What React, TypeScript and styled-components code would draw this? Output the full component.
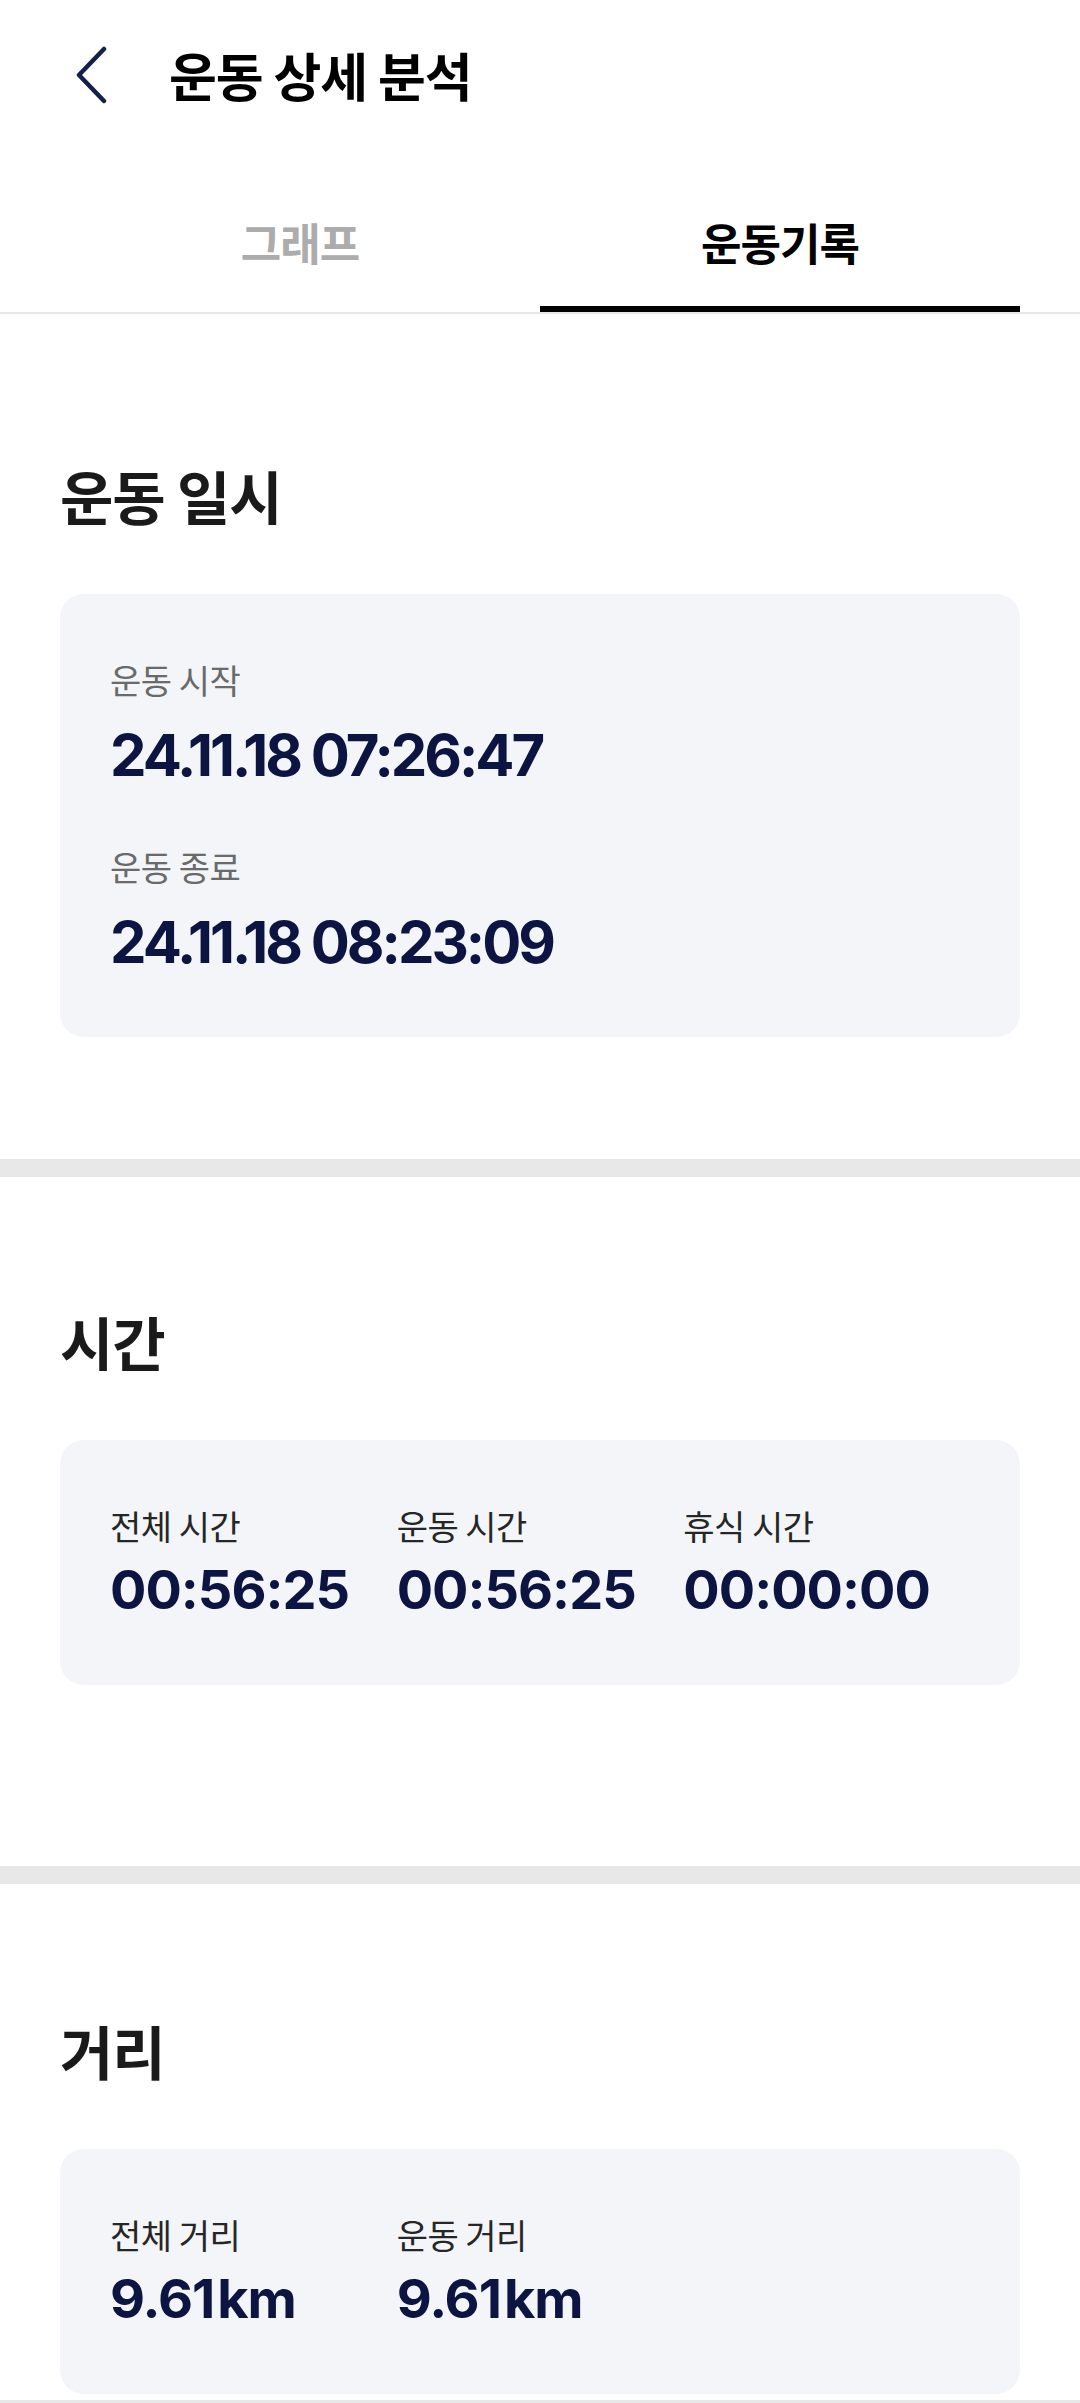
import React from 'react';
import styled, { createGlobalStyle } from 'styled-components';

const GlobalStyle = createGlobalStyle`
  body {
    margin: 0;
    background: #ffffff;
    font-family: 'Noto Sans CJK KR', 'Noto Sans', sans-serif;
  }
`;

const Page = styled.div`
  width: 1080px;
  background: #ffffff;
`;

const Header = styled.header`
  height: 150px;
  box-sizing: border-box;
  display: flex;
  align-items: center;
  gap: 62px;
  padding-left: 75px;
`;

const BackButton = styled.button`
  display: flex;
  width: 32px;
  height: 58px;
  padding: 0;
  border: 0;
  background: none;
`;

const Title = styled.h1`
  margin: 0;
  color: #000000;
  font-size: 52px;
  font-weight: 700;
  line-height: 1;
  letter-spacing: -1px;
`;

const TabBar = styled.nav`
  display: flex;
  padding: 0 60px;
  border-bottom: 2px solid #e8e8e8;
`;

const Tab = styled.div<{ $active?: boolean }>`
  flex: 1;
  height: 162px;
  box-sizing: border-box;
  padding-top: 28px;
  display: flex;
  align-items: center;
  justify-content: center;
  border-bottom: 6px solid ${(p) => (p.$active ? '#000000' : 'transparent')};
  color: ${(p) => (p.$active ? '#000000' : '#acacac')};
  font-size: 44px;
  font-weight: 700;
  letter-spacing: -1px;
`;

const Section = styled.section<{ $top: number; $bottom: number }>`
  padding: ${(p) => p.$top}px 60px ${(p) => p.$bottom}px;
`;

const Heading = styled.h2`
  margin: 0 0 65px;
  color: #1a1a1a;
  font-size: 58px;
  font-weight: 700;
  line-height: 68px;
  letter-spacing: -1px;
`;

const Divider = styled.div`
  height: 18px;
  background: #e8e8e8;
`;

const Card = styled.div<{ $bottom: number }>`
  background: #f3f5f9;
  border-radius: 24px;
  padding: 64px 50px ${(p) => p.$bottom}px;
`;

const DateList = styled.div`
  display: flex;
  flex-direction: column;
  gap: 57px;
`;

const StatGrid = styled.div`
  display: grid;
  grid-template-columns: repeat(3, 1fr);
`;

const Stat = styled.div<{ $gap: number }>`
  display: flex;
  flex-direction: column;
  gap: ${(p) => p.$gap}px;
`;

const Label = styled.div<{ $muted?: boolean }>`
  color: ${(p) => (p.$muted ? '#6a6a6a' : '#262626')};
  font-size: 34px;
  line-height: 44px;
  letter-spacing: -0.5px;
`;

const Value = styled.div<{ $size: number; $tight?: boolean }>`
  color: #0c1541;
  font-family: Inter, 'Liberation Sans', sans-serif;
  font-size: ${(p) => p.$size}px;
  font-weight: 700;
  line-height: ${(p) => p.$size + 8}px;
  letter-spacing: ${(p) => (p.$tight ? -3 : -1)}px;
  white-space: nowrap;
`;

const Unit = styled.span`
  margin-left: 3px;
`;

const ChevronLeft = () => (
  <svg width="32" height="58" viewBox="0 0 32 58" fill="none">
    <polyline
      points="29,3 4,29 29,55"
      stroke="#14204a"
      strokeWidth="4.5"
      strokeLinecap="round"
      strokeLinejoin="round"
    />
  </svg>
);

const timeStats = [
  { label: '전체 시간', value: '00:56:25' },
  { label: '운동 시간', value: '00:56:25' },
  { label: '휴식 시간', value: '00:00:00' },
];

const distanceStats = [
  { label: '전체 거리', value: '9.61' },
  { label: '운동 거리', value: '9.61' },
];

export default function App() {
  return (
    <Page>
      <GlobalStyle />
      <Header>
        <BackButton aria-label="뒤로">
          <ChevronLeft />
        </BackButton>
        <Title>운동 상세 분석</Title>
      </Header>

      <TabBar>
        <Tab>그래프</Tab>
        <Tab $active>운동기록</Tab>
      </TabBar>

      <Section $top={147} $bottom={122}>
        <Heading>운동 일시</Heading>
        <Card $bottom={62}>
          <DateList>
            <Stat $gap={20}>
              <Label $muted>운동 시작</Label>
              <Value $size={58} $tight>24.11.18 07:26:47</Value>
            </Stat>
            <Stat $gap={20}>
              <Label $muted>운동 종료</Label>
              <Value $size={58} $tight>24.11.18 08:23:09</Value>
            </Stat>
          </DateList>
        </Card>
      </Section>

      <Divider />

      <Section $top={130} $bottom={181}>
        <Heading>시간</Heading>
        <Card $bottom={64}>
          <StatGrid>
            {timeStats.map((s) => (
              <Stat key={s.label} $gap={11}>
                <Label>{s.label}</Label>
                <Value $size={54}>{s.value}</Value>
              </Stat>
            ))}
          </StatGrid>
        </Card>
      </Section>

      <Divider />

      <Section $top={132} $bottom={6}>
        <Heading>거리</Heading>
        <Card $bottom={64}>
          <StatGrid>
            {distanceStats.map((s) => (
              <Stat key={s.label} $gap={11}>
                <Label>{s.label}</Label>
                <Value $size={54}>
                  {s.value}
                  <Unit>km</Unit>
                </Value>
              </Stat>
            ))}
          </StatGrid>
        </Card>
      </Section>

      <Divider />
    </Page>
  );
}
